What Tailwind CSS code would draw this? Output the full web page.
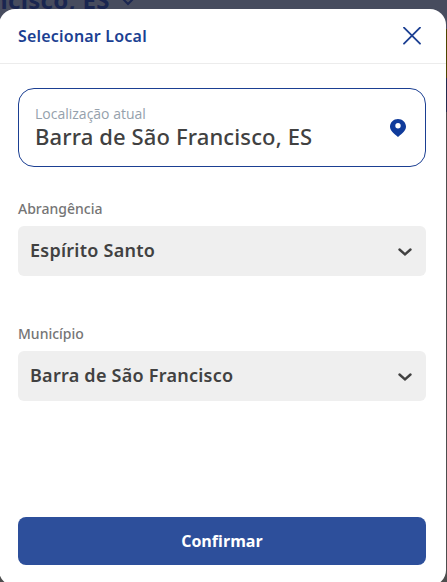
<!DOCTYPE html>
<html lang="pt-BR">

<head>
    <meta charset="UTF-8">
    <meta name="viewport" content="width=device-width, initial-scale=1.0">
    <title>Selecionar Local</title>
    <script src="https://cdn.jsdelivr.net/npm/@tailwindcss/browser@4"></script>
</head>

<body class="relative w-screen h-screen overflow-hidden bg-[#4d4d4d] font-['Noto_Sans','Open_Sans',sans-serif]">

    <!-- Page behind the modal -->
    <header class="h-[29px] bg-[#474c5e] text-[#1a2650] overflow-hidden">
        <div class="flex items-center -mt-[18px] -ml-[8px] h-9">
            <p class="text-2xl leading-9 font-bold tracking-[0.35px] whitespace-nowrap">ncisco, ES</p>
            <svg class="ml-2.5 -mt-px w-4 h-4" viewBox="0 0 16 16" fill="none" stroke="currentColor" stroke-width="2">
                <path d="M2 6l6 6 6-6" />
            </svg>
        </div>
    </header>
    <div class="h-[49px] bg-[#4d4400]"></div>
    <div class="h-[34px] bg-[#22294a]"></div>

    <!-- Modal -->
    <main class="absolute -left-px top-[9px] w-[447px] h-[577px] bg-white rounded-2xl overflow-hidden flex flex-col">
        <div class="h-[55px] shrink-0 pl-[19px] pr-[25.5px] flex items-center justify-between border-b border-[#ececec] text-[#1b3f92]">
            <h1 class="text-base font-semibold tracking-[0.2px]">Selecionar Local</h1>
            <button aria-label="Fechar">
                <svg class="w-[18px] h-[18px]" viewBox="0 0 18 18" fill="none" stroke="currentColor" stroke-width="1.8" stroke-linecap="round">
                    <path d="M1 .7l16 16M17 .7l-16 16" />
                </svg>
            </button>
        </div>

        <div class="pl-[19px] pr-5 pt-6 flex flex-col">
            <div class="h-[79px] border border-[#1b3f92] rounded-2xl pl-4 pr-[19px] flex items-center justify-between">
                <div>
                    <p class="text-sm leading-[18px] text-[#95a1ac] font-['Open_Sans',sans-serif]">Localização atual</p>
                    <p class="mb-0.5 text-[22px] leading-[26px] font-medium tracking-[0.13px] text-[#414141]">Barra de São Francisco, ES</p>
                </div>
                <svg class="w-4 h-[18px]" viewBox="0 0 16 18" fill="#103b9b">
                    <path fill-rule="evenodd" d="M8 0C3.6 0 0 3.4 0 7.6 0 11.5 3.2 14 8 18c4.8-4 8-6.500 8-10.400C16 3.400 12.400 0 8 0zm0 4a2.700 2.700 0 1 1 0 5.400A2.700 2.700 0 0 1 8 4z" />
                </svg>
            </div>

            <p class="mt-8 text-sm leading-5 font-medium text-[#757575]">Abrangência</p>
            <button class="mt-[7px] h-[50px] bg-[#efefef] rounded-md pl-3 pr-3.5 flex items-center justify-between text-[#414141]">
                <span class="-mt-0.5 text-lg font-semibold tracking-[0.25px]">Espírito Santo</span>
                <svg class="mt-0.5 w-3.5 h-2" viewBox="0 0 14 8" fill="none" stroke="currentColor" stroke-width="2.4" stroke-linecap="round">
                    <path d="M1.500 1.500L7 6.300l5.500-4.800" />
                </svg>
            </button>

            <p class="mt-12 text-sm leading-5 font-medium text-[#757575]">Município</p>
            <button class="mt-[7px] h-[50px] bg-[#efefef] rounded-md pl-3 pr-3.5 flex items-center justify-between text-[#414141]">
                <span class="-mt-0.5 text-lg font-semibold tracking-[0.25px]">Barra de São Francisco</span>
                <svg class="mt-0.5 w-3.5 h-2" viewBox="0 0 14 8" fill="none" stroke="currentColor" stroke-width="2.4" stroke-linecap="round">
                    <path d="M1.500 1.500L7 6.300l5.500-4.800" />
                </svg>
            </button>
        </div>

        <div class="mt-auto pl-[19px] pr-5 pb-[21px]">
            <button class="w-full h-12 rounded-lg bg-[#2d4f9b] text-white text-base font-bold font-['Open_Sans',sans-serif]">Confirmar</button>
        </div>
    </main>
</body>

</html>
